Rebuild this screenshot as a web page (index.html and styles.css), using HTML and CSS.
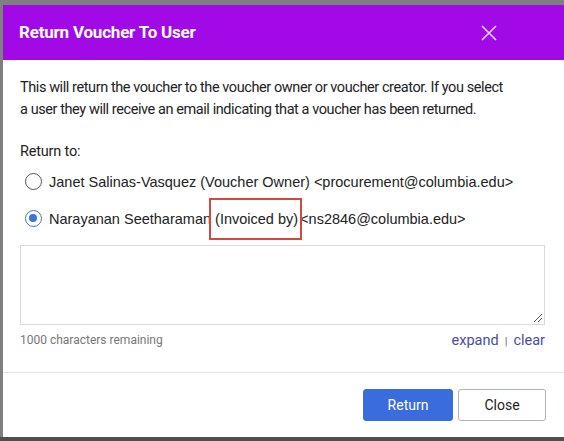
FILE: index.html
```html
<!DOCTYPE html>
<html>
<head>
<meta charset="utf-8">
<link rel="stylesheet" href="styles.css">
</head>
<body>
<div class="page">
  <div class="dialog">
    <div class="header">
      <div class="title">Return Voucher To User</div>
      <svg class="close" width="16" height="16" viewBox="0 0 16 16"><path d="M1 1 L15 15 M15 1 L1 15" stroke="#f4d8ff" stroke-width="1.6" fill="none"/></svg>
    </div>
    <div class="body">
      <p class="intro">This will return the voucher to the voucher owner or voucher creator. If you select a user they will receive an email indicating that a voucher has been returned.</p>
      <div class="label">Return to:</div>
      <label class="opt"><span class="radio"></span><span>Janet Salinas-Vasquez (Voucher Owner) &lt;procurement@columbia.edu&gt;</span></label>
      <label class="opt"><span class="radio on"></span><span>Narayanan Seetharaman <span class="hl">(Invoiced by)</span> &lt;ns2846@columbia.edu&gt;</span></label>
      <div class="ta"><span class="grip"></span></div>
      <div class="meta">
        <span class="count">1000 characters remaining</span>
        <span class="links"><a>expand</a><span class="sep">|</span><a>clear</a></span>
      </div>
    </div>
    <div class="footer">
      <button class="btn primary">Return</button>
      <button class="btn">Close</button>
    </div>
  </div>
  <div class="strip"></div>
</div>
</body>
</html>
```
FILE: styles.css
```css
html, body { margin: 0; padding: 0; }
body { background: #7f7f7f; font-family: Roboto, "Liberation Sans", sans-serif; width: 564px; height: 441px; overflow: hidden; }
.page { display: flex; flex-direction: column; height: 441px; }
.dialog { margin: 5px 0 0 3px; width: 561px; height: 432px; background: #fff; display: flex; flex-direction: column; }
.header { height: 55px; flex: none; background: #a10ae6; display: flex; align-items: center; justify-content: space-between; padding: 0 67px 0 16px; }
.title { color: #fff; font-weight: 700; font-size: 17px; letter-spacing: -0.2px; margin-top: -1px; }
.close { display: block; }
.body { padding: 17px 19px 0 17px; flex: 1; color: #222; font-size: 14.5px; }
.intro { margin: 0; line-height: 22px; letter-spacing: -0.42px; max-width: 486px; }
.label { margin-top: 20px; line-height: 22px; letter-spacing: -0.2px; }
.opt { display: flex; align-items: center; height: 37px; font-family: "Liberation Sans", Arial, sans-serif; font-size: 14.5px; color: #222; }
.radio { width: 17px; height: 17px; border: 1.5px solid #555; border-radius: 50%; margin: 0 7px 0 5px; box-sizing: border-box; position: relative; flex: none; }
.radio.on { border-color: #3b74d9; }
.radio.on::after { content: ""; position: absolute; left: 3px; top: 3px; width: 8px; height: 8px; border-radius: 50%; background: #3b74d9; }
.hl { outline: 2px solid #d2493f; padding: 11px 2px 11px 4px; margin-left: -4px; margin-right: -4px; }
.ta { margin-top: 8px; height: 80px; border: 1px solid #d9d9d9; box-sizing: border-box; position: relative; }
.grip { position: absolute; right: 2px; bottom: 2px; width: 8px; height: 8px; background: linear-gradient(135deg, transparent 45%, #555 45%, #555 55%, transparent 55%, transparent 70%, #555 70%, #555 80%, transparent 80%); }
.meta { display: flex; justify-content: space-between; align-items: center; margin-top: 7px; height: 16px; }
.count { font-size: 12px; color: #777; }
.links { font-size: 14.5px; color: #4b4ba6; }
.sep { font-size: 11px; color: #666; margin: 0 6px; }
.footer { border-top: 1px solid #e6e6e6; height: 65px; flex: none; display: flex; justify-content: flex-end; align-items: center; padding-right: 18px; gap: 5px; box-sizing: border-box; }
.btn { height: 32px; font-family: Roboto, "Liberation Sans", sans-serif; font-size: 14px; border-radius: 3px; border: 1px solid #aeb4bd; background: #fff; color: #222; width: 88px; }
.btn.primary { background: #3a6cdd; border-color: #3a6cdd; color: #fff; width: 90px; }
.strip { flex: 1; background: #4f4f4f; }
```
